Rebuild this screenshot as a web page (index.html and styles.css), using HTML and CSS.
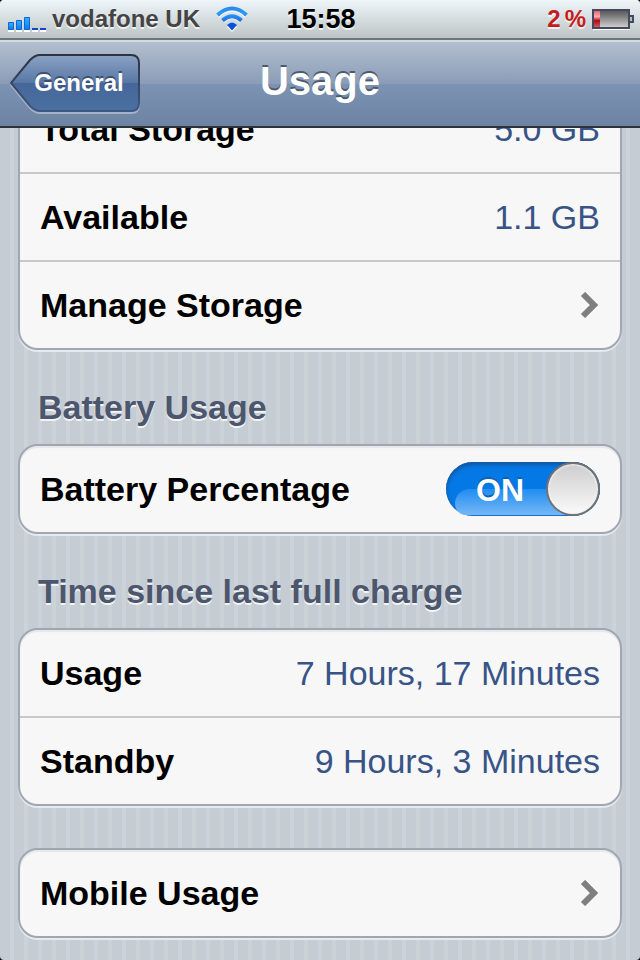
FILE: index.html
```html
<!DOCTYPE html>
<html lang="en">
<head>
  <meta charset="UTF-8">
  <meta name="viewport" content="width=device-width, initial-scale=1.0">
  <title>Usage</title>
  <link rel="stylesheet" href="styles.css">
</head>
<body>
  <div class="screen">
    <div class="status-bar">
      <div class="status-left">
        <svg class="signal" width="40" height="16" viewBox="0 0 40 16">
          <defs>
            <linearGradient id="blue" x1="0" y1="0" x2="0" y2="1">
              <stop offset="0" stop-color="#2fb4ff"/>
              <stop offset="1" stop-color="#0a7cf4"/>
            </linearGradient>
          </defs>
          <path fill="#fff" d="M0 14h6v2H0zM8 14h6v2H8zM16 14h6v2h-6zM24 14h6v2h-6zM32 14h6v2h-6z"/>
          <g fill="url(#blue)" stroke="#1363d5">
            <path d="M.5 6.5h5v7h-5z"/>
            <path d="M8.500 4.500h5v9h-5z"/>
            <path d="M16.500 1.500h5v12h-5z"/>
          </g>
          <path fill="#1544c8" d="M24 12h6v2h-6zM32 12h6v2h-6z"/>
        </svg>
        <span class="carrier">vodafone UK</span>
        <svg class="wifi" width="32" height="26" viewBox="0 0 32 26">
          <defs>
            <linearGradient id="wave" gradientUnits="userSpaceOnUse" x1="0" y1="0" x2="0" y2="24">
              <stop offset="0" stop-color="#2a86e0"/>
              <stop offset=".3" stop-color="#2c9af8"/>
              <stop offset="1" stop-color="#0445d8"/>
            </linearGradient>
          </defs>
          <g fill="none" stroke="#fff" stroke-width="4">
            <path d="M2 10q14-13 28 0M7 15q9-8 18 0"/>
          </g>
          <path fill="#fff" d="M16 26l-5-5q5-5 10 0z"/>
          <g fill="none" stroke="url(#wave)" stroke-width="4">
            <path d="M1.500 9q14.500-13 29 0M6.500 14.500q9.500-8.500 19 0"/>
          </g>
          <path fill="#0752dc" d="M16 24.500l-5-5.500q5-5 10 0z"/>
        </svg>
      </div>
      <span class="clock">15:58</span>
      <div class="status-right">
        <span class="percent"><span>2</span><span>%</span></span>
        <svg width="42" height="22" viewBox="0 0 42 22">
          <defs>
            <linearGradient id="cell" x1="0" y1="0" x2="0" y2="1">
              <stop offset="0" stop-color="#555"/>
              <stop offset=".3" stop-color="#777"/>
              <stop offset="1" stop-color="#d4d4d4"/>
            </linearGradient>
            <linearGradient id="low" x1="0" y1="0" x2="0" y2="1">
              <stop offset="0" stop-color="#e8606c"/>
              <stop offset=".35" stop-color="#ffb0b4"/>
              <stop offset=".6" stop-color="#b00c14"/>
              <stop offset="1" stop-color="#d85058"/>
            </linearGradient>
          </defs>
          <path fill="#fff" d="M1 20h37v2H1z"/>
          <rect x="1" y="2" width="36" height="18" fill="url(#cell)" stroke="#434a60" stroke-width="2"/>
          <rect x="2" y="3" width="6" height="16" fill="url(#low)"/>
          <path fill="#b8bcc4" stroke="#434a60" stroke-width="2" d="M38 8h3v6h-3"/>
        </svg>
      </div>
    </div>

    <header class="nav-bar">
      <button class="back" type="button">
        <svg class="back-shape" width="130" height="60" viewBox="0 0 130 60">
          <defs>
            <linearGradient id="back-fill" x1="0" y1="0" x2="0" y2="1">
              <stop offset="0" stop-color="#8ba3c3"/>
              <stop offset=".5" stop-color="#5877a5"/>
              <stop offset=".5" stop-color="#45669a"/>
              <stop offset="1" stop-color="#4c70a2"/>
            </linearGradient>
            <linearGradient id="back-edge" x1="0" y1="0" x2="0" y2="1">
              <stop offset="0" stop-color="#2b3442"/>
              <stop offset="1" stop-color="#3e5981"/>
            </linearGradient>
          </defs>
          <path fill="none" stroke="#a5b3c9" stroke-width="2" d="M1 31L20 8Q25 3 30 3H121Q129 3 129 11V51Q129 59 121 59H30Q25 59 20 54Z"/>
          <path fill="url(#back-fill)" stroke="url(#back-edge)" stroke-width="2" d="M1 29L20 6Q25 1 30 1H121Q129 1 129 9V49Q129 57 121 57H30Q25 57 20 52Z"/>
        </svg>
        <span class="back-text">General</span>
      </button>
      <h1>Usage</h1>
    </header>

    <main class="content">
      <ul class="group scrolled">
        <li class="row"><span>Total Storage</span><span class="value">5.0 GB</span></li>
        <li class="row"><span>Available</span><span class="value">1.1 GB</span></li>
        <li class="row">
          <a class="link" href="#">Manage Storage
            <svg class="chevron" width="20" height="26" viewBox="0 0 20 26"><path d="M3 2l11 11L3 24"/></svg>
          </a>
        </li>
      </ul>

      <h2>Battery Usage</h2>
      <ul class="group">
        <li class="row">
          <label for="batteryPercentage">Battery Percentage</label>
          <span class="switch">
            <input type="checkbox" id="batteryPercentage" checked>
            <span class="switch-text">ON</span>
            <span class="knob"></span>
          </span>
        </li>
      </ul>

      <h2>Time since last full charge</h2>
      <ul class="group">
        <li class="row"><span>Usage</span><span class="value">7 Hours, 17 Minutes</span></li>
        <li class="row"><span>Standby</span><span class="value">9 Hours, 3 Minutes</span></li>
      </ul>

      <ul class="group spaced">
        <li class="row">
          <a class="link" href="#">Mobile Usage
            <svg class="chevron" width="20" height="26" viewBox="0 0 20 26"><path d="M3 2l11 11L3 24"/></svg>
          </a>
        </li>
      </ul>
    </main>
  </div>
</body>
</html>
```

FILE: styles.css
```css
* {
  box-sizing: border-box;
}

body {
  margin: 0;
  background-color: #000;
  font-family: "Liberation Sans", Arial, sans-serif;
  font-weight: bold;
}

.screen {
  display: flex;
  flex-direction: column;
  height: 100vh;
  overflow: hidden;
  border-radius: 4px;
  background: repeating-linear-gradient(to right, #c5ccd4 0, #c5ccd4 10px, #cbd2d8 10px, #cbd2d8 14px);
}

/* status bar */
.status-bar {
  display: grid;
  grid-template-columns: 1fr auto 1fr;
  align-items: center;
  flex: none;
  height: 40px;
  padding: 0 6px 0 8px;
  border-bottom: 2px solid #6c7778;
  background: linear-gradient(#eef6fa, #bdc4c5);
  text-shadow: 0 2px 0 rgba(255, 255, 255, 0.7);
}

.status-left,
.status-right {
  display: flex;
  align-items: center;
}

.status-right {
  justify-content: flex-end;
  gap: 6px;
}

.signal {
  margin: 10px 4px 0 0;
}

.carrier {
  color: #444;
  font-size: 24px;
}

.wifi {
  margin-left: 16px;
}

.clock {
  color: #000;
  font-size: 27px;
}

.percent {
  display: flex;
  gap: 4px;
  color: #c41d20;
  font-size: 24px;
}

/* navigation bar */
.nav-bar {
  display: grid;
  grid-template-columns: 1fr auto 1fr;
  align-items: center;
  flex: none;
  height: 88px;
  padding: 0 10px 2px;
  border-top: 2px solid #d3dae3;
  border-bottom: 2px solid #2d3035;
  background: linear-gradient(#b3bfcf, #8a9cb6 50%, #7c93b3 50%, #6d83a3);
}

h1 {
  margin: 0;
  padding-bottom: 4px;
  color: #fff;
  font-size: 40px;
  line-height: 44px;
  text-shadow: 0 -2px 0 #4d5a6c;
}

.back {
  position: relative;
  width: 130px;
  height: 58px;
  padding: 0 8px 0 16px;
  border: 0;
  background: none;
  color: #fff;
  font: inherit;
  font-size: 24px;
  text-shadow: 0 -2px 0 #3c506f;
}

.back-shape {
  position: absolute;
  top: 0;
  left: 0;
}

.back-text {
  position: relative;
}

/* settings list */
.content {
  flex: 1;
  min-height: 0;
  overflow: hidden;
  padding: 0 18px;
  font-size: 34px;
  line-height: 40px;
}

h2 {
  margin: 0;
  padding: 37px 20px 17px;
  color: #4c566c;
  font-size: 34px;
  line-height: 40px;
  text-shadow: 0 2px 0 rgba(255, 255, 255, 0.8);
}

.group {
  margin: 0;
  padding: 0;
  list-style: none;
  border: 2px solid #a0a7b0;
  border-radius: 20px;
  background-color: #f7f7f7;
  box-shadow: 0 2px 0 #e6eaed, inset 0 2px 1px #e6e7e8;
}

.scrolled {
  margin-top: -44px;
}

.spaced {
  margin-top: 42px;
}

.row {
  display: flex;
  align-items: center;
  justify-content: space-between;
  height: 86px;
  padding: 0 20px;
  color: #000;
}

.row + .row {
  height: 88px;
  border-top: 2px solid #c8c8c8;
}

.value {
  color: #385487;
  font-weight: normal;
}

.link {
  display: flex;
  align-items: center;
  justify-content: space-between;
  width: 100%;
  color: inherit;
  text-decoration: none;
}

.chevron {
  fill: none;
  stroke: #7f7f7f;
  stroke-width: 6;
}

/* on/off switch */
.switch {
  position: relative;
  width: 154px;
  height: 54px;
}

.switch input {
  appearance: none;
  display: block;
  width: 100%;
  height: 100%;
  margin: 0;
  border-radius: 27px;
  background-color: #0479e6;
  box-shadow: inset 0 3px 4px #1455a0, inset 0 0 3px #2f679e;
}

.switch::before {
  content: "";
  position: absolute;
  right: 27px;
  bottom: 1px;
  left: 9px;
  height: 26px;
  border-radius: 16px 0 0 12px;
  background: linear-gradient(#218df0, #74b8f7);
  pointer-events: none;
}

.switch-text {
  position: absolute;
  top: 8px;
  left: 30px;
  color: #fff;
  font-size: 32px;
  text-shadow: 0 -2px 0 #0b62b8;
  pointer-events: none;
}

.knob {
  position: absolute;
  top: 0;
  right: 0;
  width: 54px;
  height: 54px;
  border: 2px solid #707274;
  border-radius: 50%;
  background: linear-gradient(#cdcdcd, #fafafa);
  box-shadow: inset 0 0 2px 1px #f4f4f4;
  pointer-events: none;
}
```
